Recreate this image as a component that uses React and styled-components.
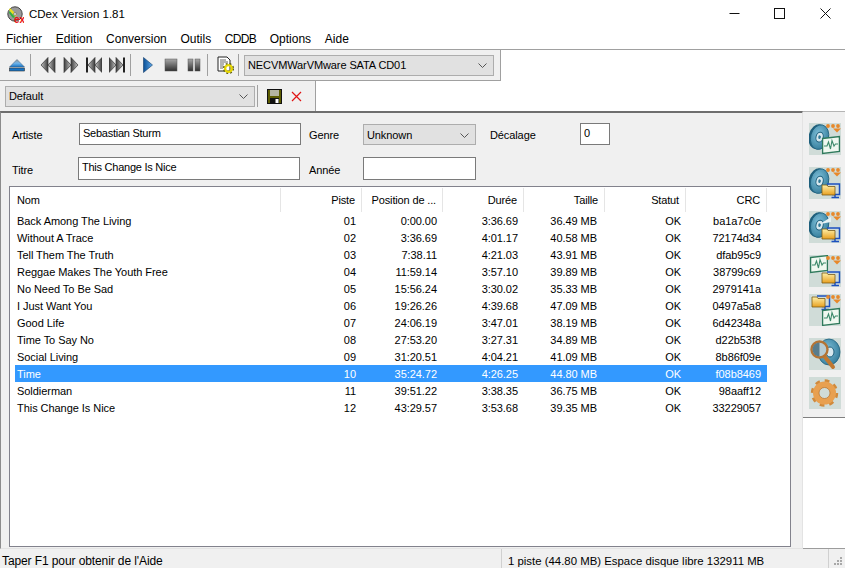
import styled, { createGlobalStyle } from "styled-components";

const GlobalStyle = createGlobalStyle`
  html, body {
    margin: 0;
    padding: 0;
    background: #fff;
  }
  * {
    box-sizing: border-box;
  }
`;

const tracks = [
  ["Back Among The Living", "01", "0:00.00", "3:36.69", "36.49 MB", "OK", "ba1a7c0e"],
  ["Without A Trace", "02", "3:36.69", "4:01.17", "40.58 MB", "OK", "72174d34"],
  ["Tell Them The Truth", "03", "7:38.11", "4:21.03", "43.91 MB", "OK", "dfab95c9"],
  ["Reggae Makes The Youth Free", "04", "11:59.14", "3:57.10", "39.89 MB", "OK", "38799c69"],
  ["No Need To Be Sad", "05", "15:56.24", "3:30.02", "35.33 MB", "OK", "2979141a"],
  ["I Just Want You", "06", "19:26.26", "4:39.68", "47.09 MB", "OK", "0497a5a8"],
  ["Good Life", "07", "24:06.19", "3:47.01", "38.19 MB", "OK", "6d42348a"],
  ["Time To Say No", "08", "27:53.20", "3:27.31", "34.89 MB", "OK", "d22b53f8"],
  ["Social Living", "09", "31:20.51", "4:04.21", "41.09 MB", "OK", "8b86f09e"],
  ["Time", "10", "35:24.72", "4:26.25", "44.80 MB", "OK", "f08b8469"],
  ["Soldierman", "11", "39:51.22", "3:38.35", "36.75 MB", "OK", "98aaff12"],
  ["This Change Is Nice", "12", "43:29.57", "3:53.68", "39.35 MB", "OK", "33229057"],
];

const headers = ["Piste", "Position de ...", "Durée", "Taille", "Statut", "CRC"];
// right padding of the cells, the list columns are not quite even
const cellPad = [0, 6, 6, 6, 8, 5, 6];

const GradientDefs = () => (
  <svg width="0" height="0" style={{ position: "absolute" }}>
    <defs>
      <linearGradient id="steel" x1="0" y1="0" x2="1" y2="0">
        <stop offset="0" stopColor="#3c3c3c" />
        <stop offset="1" stopColor="#c4c4c4" />
      </linearGradient>
      <linearGradient id="steelBack" x1="1" y1="0" x2="0" y2="0">
        <stop offset="0" stopColor="#3c3c3c" />
        <stop offset="1" stopColor="#c4c4c4" />
      </linearGradient>
      <linearGradient id="block" x1="0" y1="0" x2="0" y2="1">
        <stop offset="0" stopColor="#a8a8a8" />
        <stop offset="1" stopColor="#303030" />
      </linearGradient>
      <linearGradient id="blue" x1="0" y1="0" x2="1" y2="0">
        <stop offset="0" stopColor="#0a4f96" />
        <stop offset="1" stopColor="#5fa8e8" />
      </linearGradient>
      <linearGradient id="ejectTop" x1="0" y1="0" x2="0" y2="1">
        <stop offset="0" stopColor="#9a9a9a" />
        <stop offset="0.5" stopColor="#6fb4ea" />
        <stop offset="1" stopColor="#1673c4" />
      </linearGradient>
      <radialGradient id="discFill" cx="0.4" cy="0.4" r="0.7">
        <stop offset="0" stopColor="#7fc0da" />
        <stop offset="1" stopColor="#2f7896" />
      </radialGradient>
      <linearGradient id="folderFill" x1="0" y1="0" x2="0" y2="1">
        <stop offset="0" stopColor="#fff0a8" />
        <stop offset="1" stopColor="#e8a020" />
      </linearGradient>
    </defs>
  </svg>
);

const Tool = ({ children }) => (
  <svg width="16" height="16" viewBox="0 0 16 16">
    {children}
  </svg>
);

const EjectIcon = () => (
  <Tool>
    <path d="M8 2.5 L15.5 10 H0.5 Z" fill="url(#ejectTop)" stroke="#3a5a78" strokeWidth="0.5" />
    <rect x="0.5" y="11" width="15" height="3" fill="#1673c4" stroke="#333" strokeWidth="0.6" />
  </Tool>
);

const RewindIcon = () => (
  <Tool>
    <path d="M8 0.5 L1 8 L8 15.5 Z" fill="url(#steelBack)" stroke="#333" strokeWidth="0.7" />
    <path d="M15 0.5 L8 8 L15 15.5 Z" fill="url(#steelBack)" stroke="#333" strokeWidth="0.7" />
  </Tool>
);

const ForwardIcon = () => (
  <Tool>
    <path d="M1 0.5 L8 8 L1 15.5 Z" fill="url(#steel)" stroke="#333" strokeWidth="0.7" />
    <path d="M8 0.5 L15 8 L8 15.5 Z" fill="url(#steel)" stroke="#333" strokeWidth="0.7" />
  </Tool>
);

const PrevIcon = () => (
  <Tool>
    <rect x="0" y="0.5" width="2" height="15" fill="#222" />
    <path d="M9 0.5 L2 8 L9 15.5 Z" fill="url(#steelBack)" stroke="#333" strokeWidth="0.7" />
    <path d="M16 0.5 L9 8 L16 15.5 Z" fill="url(#steelBack)" stroke="#333" strokeWidth="0.7" />
  </Tool>
);

const NextIcon = () => (
  <Tool>
    <path d="M0 0.5 L7 8 L0 15.5 Z" fill="url(#steel)" stroke="#333" strokeWidth="0.7" />
    <path d="M7 0.5 L14 8 L7 15.5 Z" fill="url(#steel)" stroke="#333" strokeWidth="0.7" />
    <rect x="14" y="0.5" width="2" height="15" fill="#222" />
  </Tool>
);

const PlayIcon = () => (
  <Tool>
    <path d="M3.5 0.5 L12.5 8 L3.5 15.5 Z" fill="url(#blue)" stroke="#123d6b" strokeWidth="0.6" />
  </Tool>
);

const StopIcon = () => (
  <Tool>
    <rect x="2" y="2" width="12" height="12" fill="url(#block)" stroke="#555" strokeWidth="0.5" />
  </Tool>
);

const PauseIcon = () => (
  <Tool>
    <rect x="2" y="2" width="5" height="12" fill="url(#block)" stroke="#555" strokeWidth="0.5" />
    <rect x="9" y="2" width="5" height="12" fill="url(#block)" stroke="#555" strokeWidth="0.5" />
  </Tool>
);

const PropsIcon = () => (
  <svg width="18" height="18" viewBox="0 0 18 18">
    <path d="M2 1 H11 L14 4 V15 H2 Z" fill="#fff" stroke="#222" strokeWidth="1" />
    <path d="M4 4 H10 M4 6 H12 M4 8 H8 M4 10 H7 M4 12 H7" stroke="#555" strokeWidth="0.9" />
    <circle cx="12.5" cy="12.5" r="3.4" fill="none" stroke="#e8d800" strokeWidth="2.4" />
    <circle cx="12.5" cy="12.5" r="5" fill="none" stroke="#5c5c10" strokeWidth="1.2" strokeDasharray="2 2" />
  </svg>
);

const SaveIcon = () => (
  <svg width="15" height="15" viewBox="0 0 15 15">
    <rect x="0.5" y="0.5" width="14" height="14" fill="#5c5c00" stroke="#111" />
    <rect x="3" y="1" width="9" height="6" fill="#b4b4a0" />
    <rect x="3" y="9" width="9" height="5.5" fill="#111" />
    <rect x="8.5" y="10" width="3" height="4" fill="#fff" />
  </svg>
);

const DeleteIcon = () => (
  <svg width="11" height="11" viewBox="0 0 11 11">
    <path d="M1 1 L10 10 M10 1 L1 10" stroke="#e01414" strokeWidth="1.2" />
  </svg>
);

const Chevron = () => (
  <svg width="9" height="5" viewBox="0 0 9 5">
    <path d="M0.5 0.5 L4.5 4.5 L8.5 0.5" fill="none" stroke="#555" />
  </svg>
);

const AppLogo = () => (
  <svg width="17" height="17" viewBox="0 0 17 17">
    <circle cx="8" cy="8" r="7.2" fill="#9a9a9a" stroke="#444" />
    <path d="M3 2 L10 9 L8 11 L2 4 Z" fill="#e8e020" />
    <path d="M2.5 5 L8 11 L6 12 L2 7 Z" fill="#30b040" />
    <circle cx="8" cy="8" r="1.5" fill="#ddd" stroke="#555" strokeWidth="0.5" />
    <text x="7" y="16.5" fontSize="10" fontWeight="700" fontFamily="Liberation Sans, sans-serif" fill="#e81010">
      ex
    </text>
  </svg>
);

const Dots = () => (
  <g fill="#e8882a">
    <circle cx="19" cy="3" r="1.9" />
    <circle cx="24" cy="3" r="1.9" />
    <circle cx="29" cy="3" r="1.9" />
    <path d="M24 5.5 H32 L28 9.5 Z" />
  </g>
);

const Disc = () => (
  <g transform="rotate(14 10 14)">
    <ellipse cx="8.6" cy="14" rx="9" ry="12.5" fill="#1e5f7c" />
    <ellipse cx="10.6" cy="14" rx="9" ry="12.5" fill="url(#discFill)" stroke="#1e5f7c" strokeWidth="0.8" />
    <ellipse cx="10.6" cy="14" rx="3.6" ry="5" fill="#d7e8ee" stroke="#1e5f7c" strokeWidth="1" />
    <ellipse cx="10.6" cy="14" rx="1.3" ry="1.8" fill="#2f7896" />
  </g>
);

const Wave = ({ x, y }) => (
  <g transform={`translate(${x} ${y})`}>
    <path d="M0.6 2.5 L17.4 0.6 V15.5 L0.6 17.4 Z" fill="#f0f8f0" stroke="#2f7a5c" strokeWidth="1.3" />
    <path
      d="M2 10 H5 L6.5 6 L8.5 13 L10 4.5 L12 10 L13.5 8 H16"
      fill="none"
      stroke="#3d8a6b"
      strokeWidth="1.1"
    />
  </g>
);

const Folder = ({ x, y }) => (
  <g transform={`translate(${x} ${y})`}>
    <path d="M5 1 H17.5 V11.5 H10 M13 11.5 V14 M9.5 14.5 H17" fill="none" stroke="#1c50c0" strokeWidth="1.5" />
    <path d="M0 2 H5 L6 3.5 H13 V12 H0 Z" fill="url(#folderFill)" stroke="#7a5a18" strokeWidth="0.8" />
  </g>
);

const Magnifier = () => (
  <g>
    <ellipse cx="20" cy="14" rx="11" ry="13" fill="url(#discFill)" stroke="#1e5f7c" strokeWidth="0.8" />
    <ellipse cx="21" cy="14" rx="4" ry="5" fill="#d7e8ee" stroke="#1e5f7c" />
    <path d="M16 19 L24 29" stroke="#c07830" strokeWidth="4" strokeLinecap="round" />
    <circle cx="10.5" cy="11.5" r="8" fill="#b8cdd4" stroke="#b47434" strokeWidth="2.4" />
    <path d="M10.5 4.5 A7 7 0 0 0 10.5 18.5 Z" fill="#587c8c" />
  </g>
);

const Gear = () => (
  <g>
    <circle cx="15.5" cy="16" r="12" fill="none" stroke="#d08a3c" strokeWidth="3.4" strokeDasharray="4.6 4.8" />
    <circle cx="15.5" cy="16" r="8.5" fill="none" stroke="#e8a050" strokeWidth="6" />
    <circle cx="15.5" cy="16" r="5.5" fill="none" stroke="#b87028" strokeWidth="0.7" />
  </g>
);

const sideIcons = [
  { gap: 0, art: <><Disc /><Wave x={13} y={13} /><Dots /></> },
  { gap: 12, art: <><Disc /><Folder x={13} y={16} /><Dots /></> },
  {
    gap: 12,
    art: (
      <>
        <Disc />
        <path d="M11 13 L22 6 V11 Z" fill="#e8f2f4" />
        <Folder x={13} y={16} />
        <Dots />
      </>
    ),
  },
  { gap: 12, art: <><Wave x={1} y={0} /><Folder x={13} y={16} /><Dots /></> },
  { gap: 7, art: <><Folder x={3} y={1} /><Wave x={13} y={14} /><Dots /></> },
  { gap: 12, art: <Magnifier /> },
  { gap: 7, art: <Gear /> },
];

export default function App() {
  return (
    <Window>
      <GlobalStyle />
      <GradientDefs />
      <TitleBar>
        <TitleLeft>
          <AppLogo />
          <TitleText>CDex Version 1.81</TitleText>
        </TitleLeft>
        <WindowControls>
          <WindowButton>
            <svg width="11" height="11" viewBox="0 0 11 11">
              <path d="M0.5 5.5 H10.5" stroke="#111" />
            </svg>
          </WindowButton>
          <WindowButton>
            <svg width="11" height="11" viewBox="0 0 11 11">
              <rect x="0.5" y="0.5" width="10" height="10" fill="none" stroke="#111" />
            </svg>
          </WindowButton>
          <WindowButton>
            <svg width="11" height="11" viewBox="0 0 11 11">
              <path d="M0.5 0.5 L10.5 10.5 M10.5 0.5 L0.5 10.5" stroke="#111" />
            </svg>
          </WindowButton>
        </WindowControls>
      </TitleBar>

      <MenuBar>
        {["Fichier", "Edition", "Conversion", "Outils"].map((m) => (
          <MenuItem key={m}>{m}</MenuItem>
        ))}
        <MenuItem $tight>CDDB</MenuItem>
        {["Options", "Aide"].map((m) => (
          <MenuItem key={m}>{m}</MenuItem>
        ))}
      </MenuBar>

      <ToolRow $width={501} $height={31}>
        <ToolButton><EjectIcon /></ToolButton>
        <ToolSep />
        <ToolButton><RewindIcon /></ToolButton>
        <ToolButton><ForwardIcon /></ToolButton>
        <ToolButton><PrevIcon /></ToolButton>
        <ToolButton><NextIcon /></ToolButton>
        <ToolSep />
        <ToolButton><PlayIcon /></ToolButton>
        <ToolButton><StopIcon /></ToolButton>
        <ToolButton><PauseIcon /></ToolButton>
        <ToolSep />
        <ToolButton><PropsIcon /></ToolButton>
        <ToolSep />
        <Combo $width={250}>
          <span>NECVMWarVMware SATA CD01</span>
          <Chevron />
        </Combo>
      </ToolRow>

      <ToolRow $width={316} $height={30} $flat>
        <Combo $width={250}>
          <span>Default</span>
          <Chevron />
        </Combo>
        <ToolSep />
        <ToolButton><SaveIcon /></ToolButton>
        <ToolButton $narrow><DeleteIcon /></ToolButton>
      </ToolRow>

      <Body>
        <MainPanel>
          <FormRow>
            <FieldLabel $width={67}>Artiste</FieldLabel>
            <TextField $width={222} readOnly value="Sebastian Sturm" />
            <FieldLabel $width={54} $gap={8}>Genre</FieldLabel>
            <FormCombo $width={113}>
              <span>Unknown</span>
              <Chevron />
            </FormCombo>
            <FieldLabel $width={90} $gap={14}>Décalage</FieldLabel>
            <TextField $width={30} readOnly value="0" />
          </FormRow>
          <FormRow $gap={12} $height={23}>
            <FieldLabel $width={66}>Titre</FieldLabel>
            <TextField $width={222} readOnly value="This Change Is Nice" />
            <FieldLabel $width={54} $gap={9}>Année</FieldLabel>
            <TextField $width={113} readOnly value="" />
          </FormRow>

          <TrackList>
            <HeaderRow>
              <HeaderCell $name>Nom</HeaderCell>
              {headers.map((h) => (
                <HeaderCell key={h}>{h}</HeaderCell>
              ))}
            </HeaderRow>
            {tracks.map((t) => (
              <TrackRow key={t[1]} $selected={t[1] === "10"}>
                {t.map((value, i) => (
                  <TrackCell key={i} $name={i === 0} $pad={cellPad[i]}>{value}</TrackCell>
                ))}
              </TrackRow>
            ))}
          </TrackList>
        </MainPanel>

        <SideColumn>
          <SidePanel>
            {sideIcons.map((icon, i) => (
              <SideTile key={i} $gap={icon.gap}>
                <svg width="32" height="32" viewBox="0 0 32 32">
                  {icon.art}
                </svg>
              </SideTile>
            ))}
          </SidePanel>
          <SideEmpty />
        </SideColumn>
      </Body>

      <StatusBar>
        <StatusHint>Taper F1 pour obtenir de l'Aide</StatusHint>
        <StatusInfo>1 piste (44.80 MB) Espace disque libre 132911 MB</StatusInfo>
        <StatusGrip>
          <svg width="12" height="12" viewBox="0 0 12 12">
            <g fill="#a8a8a8">
              <rect x="8" y="1" width="2" height="2" />
              <rect x="5" y="4" width="2" height="2" />
              <rect x="8" y="4" width="2" height="2" />
              <rect x="2" y="7" width="2" height="2" />
              <rect x="5" y="7" width="2" height="2" />
              <rect x="8" y="7" width="2" height="2" />
            </g>
          </svg>
        </StatusGrip>
      </StatusBar>
    </Window>
  );
}

const Window = styled.div`
  width: 845px;
  height: 568px;
  display: flex;
  flex-direction: column;
  overflow: hidden;
  background: #fff;
  color: #000;
  font-family: "Liberation Sans", Arial, sans-serif;
  font-size: 11px;
`;

const TitleBar = styled.div`
  height: 28px;
  flex: none;
  display: flex;
  justify-content: space-between;
  align-items: center;
`;

const TitleLeft = styled.div`
  display: flex;
  align-items: center;
  gap: 5px;
  padding-left: 7px;
`;

const TitleText = styled.span`
  font-size: 11.5px;
`;

const WindowControls = styled.div`
  display: flex;
  margin-right: -3px;
  padding-bottom: 2px;
`;

const WindowButton = styled.div`
  width: 45.5px;
  height: 26px;
  display: flex;
  align-items: center;
  justify-content: center;
`;

const MenuBar = styled.div`
  height: 22px;
  flex: none;
  display: flex;
  align-items: center;
  padding: 1px 0 0 6px;
  gap: 13.7px;
  border-bottom: 1px solid #a0a0a0;
`;

const MenuItem = styled.span`
  font-size: 12px;
  letter-spacing: ${(p) => (p.$tight ? "-0.7px" : "0")};
`;

const ToolRow = styled.div`
  width: ${(p) => p.$width}px;
  height: ${(p) => p.$height}px;
  flex: none;
  display: flex;
  align-items: center;
  padding-left: 5px;
  background: #f0f0f0;
  border-right: 1px solid #a0a0a0;
  border-bottom: ${(p) => (p.$flat ? "none" : "1px solid #a0a0a0")};
`;

const ToolButton = styled.div`
  width: ${(p) => (p.$narrow ? 21 : 23)}px;
  height: 22px;
  flex: none;
  display: flex;
  align-items: center;
  justify-content: center;
`;

const ToolSep = styled.div`
  width: 1px;
  height: 22px;
  flex: none;
  margin: 0 5px 0 2px;
  background: #a0a0a0;
`;

const Combo = styled.div`
  width: ${(p) => p.$width}px;
  height: 21px;
  flex: none;
  display: flex;
  align-items: center;
  justify-content: space-between;
  padding: 0 6px 0 3px;
  background: #e1e1e1;
  border: 1px solid #adadad;
  letter-spacing: -0.1px;
`;

const FormCombo = styled(Combo)`
  align-self: flex-end;
  padding-top: 1px;
`;

const Body = styled.div`
  flex: 1;
  min-height: 0;
  display: flex;
`;

const MainPanel = styled.div`
  width: 803px;
  flex: none;
  display: flex;
  flex-direction: column;
  padding: 10px 11px 1px 8px;
  background: #f0f0f0;
  border-top: 2px solid #6e6e6e;
  border-left: 1px solid #8c8c8c;
  border-right: 1px solid #e3e3e3;
  border-bottom: 1px solid #e3e3e3;
`;

const FormRow = styled.div`
  height: ${(p) => p.$height || 22}px;
  flex: none;
  display: flex;
  align-items: center;
  margin-top: ${(p) => p.$gap || 0}px;
  padding-left: 3px;
`;

const FieldLabel = styled.span`
  width: ${(p) => p.$width}px;
  flex: none;
  margin-left: ${(p) => p.$gap || 0}px;
  padding-top: 2px;
  letter-spacing: -0.1px;
`;

const TextField = styled.input`
  width: ${(p) => p.$width}px;
  height: 100%;
  flex: none;
  margin: 0;
  padding: 0 3px 3px;
  border: 1px solid #7a7a7a;
  border-radius: 0;
  outline: none;
  background: #fff;
  color: #000;
  font: inherit;
  letter-spacing: -0.25px;
`;

const TrackList = styled.div`
  flex: 1;
  min-height: 0;
  margin-top: 6px;
  padding-top: 1px;
  background: #fff;
  border: 1px solid #82828c;
`;

const columns = "repeat(6, 81px)";

const HeaderRow = styled.div`
  display: grid;
  grid-template-columns: 271px ${columns};
  height: 24px;
`;

const HeaderCell = styled.div`
  display: flex;
  align-items: center;
  justify-content: ${(p) => (p.$name ? "flex-start" : "flex-end")};
  padding: ${(p) => (p.$name ? "0 0 0 7px" : "0 6px 0 0")};
  border-right: 1px solid #e5e5e5;
  white-space: nowrap;
  letter-spacing: -0.15px;
`;

const TrackRow = styled.div`
  display: grid;
  grid-template-columns: 266px ${columns};
  height: 17px;
  margin-left: 5px;
  width: 752px;
  align-items: center;
  background: ${(p) => (p.$selected ? "#3399ff" : "transparent")};
  color: ${(p) => (p.$selected ? "#fff" : "#000")};
`;

const TrackCell = styled.div`
  text-align: ${(p) => (p.$name ? "left" : "right")};
  padding: ${(p) => (p.$name ? "0 0 0 2px" : `0 ${p.$pad}px 0 0`)};
  white-space: nowrap;
  letter-spacing: -0.05px;
`;

const SideColumn = styled.div`
  flex: 1;
  display: flex;
  flex-direction: column;
`;

const SidePanel = styled.div`
  height: 307px;
  flex: none;
  display: flex;
  flex-direction: column;
  padding: 11px 0 0 6px;
  background: #f0f0f0;
  border-top: 1px solid #b4b4b4;
  border-bottom: 1px solid #808080;
`;

const SideTile = styled.div`
  width: 32px;
  height: 32px;
  flex: none;
  margin-top: ${(p) => p.$gap}px;
  background: #d0dcd8;

  svg {
    display: block;
  }
`;

const SideEmpty = styled.div`
  flex: 1;
  background: #fff;
  border-bottom: 1px solid #9c9c9c;
`;

const StatusBar = styled.div`
  height: 19px;
  flex: none;
  display: grid;
  grid-template-columns: 501px 327px 1fr;
  background: #f0f0f0;
`;

const StatusHint = styled.div`
  display: flex;
  align-items: center;
  padding: 4px 0 0 2px;
  font-size: 12px;
  letter-spacing: -0.1px;
`;

const StatusInfo = styled.div`
  display: flex;
  align-items: center;
  padding: 4px 0 0 6px;
  border-left: 1px solid #d0d0d0;
  font-size: 11.4px;
`;

const StatusGrip = styled.div`
  display: flex;
  align-items: flex-end;
  justify-content: flex-end;
  padding-right: 1px;
  border-left: 1px solid #d0d0d0;
`;
